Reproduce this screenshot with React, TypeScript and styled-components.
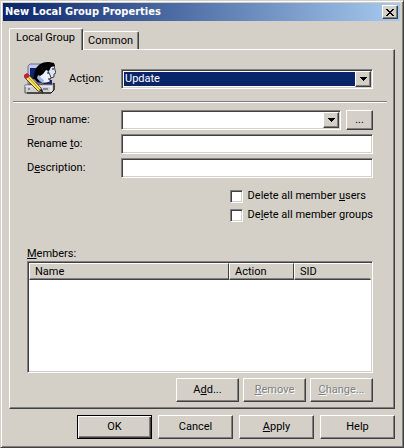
import React, { useState } from "react";
import styled, { createGlobalStyle, css } from "styled-components";

const face = "#d4d0c8";
const light = "#ffffff";
const shadow = "#808080";
const dark = "#404040";
const navy = "#0a246a";

const GlobalStyle = createGlobalStyle`
  *, *::before, *::after { box-sizing: border-box; }
  body { margin: 0; background: ${face}; }
  body, button, input, select, table {
    font-family: Roboto, Tahoma, sans-serif;
    font-size: 11px;
    line-height: 14px;
    color: #000;
  }
`;

const raised = css`
  border: 1px solid;
  border-color: ${light} ${dark} ${dark} ${light};
  box-shadow: inset -1px -1px 0 ${shadow};
`;

const sunken = css`
  border: 1px solid;
  border-color: ${shadow} ${light} ${light} ${shadow};
  box-shadow: inset 1px 1px 0 ${dark}, inset -1px -1px 0 ${face};
`;

const Dialog = styled.main`
  display: flex;
  flex-direction: column;
  min-height: 100vh;
  padding: 1px 2px 8px 1px;
  background: ${face};
  border: 1px solid;
  border-color: ${face} ${dark} ${dark} ${face};
  box-shadow: inset 1px 1px 0 ${light}, inset -1px -1px 0 ${shadow};
`;

const TitleBar = styled.header`
  display: flex;
  align-items: center;
  justify-content: space-between;
  height: 18px;
  margin: 1px 1px 0;
  padding: 0 2px;
  background: linear-gradient(to right, ${navy}, #a6caf0);
`;

const Title = styled.h1`
  margin: 0;
  font-family: "DejaVu Sans Condensed", "DejaVu Sans", Tahoma, sans-serif;
  font-size: 11px;
  line-height: 18px;
  font-weight: bold;
  color: #fff;
`;

const CloseButton = styled.button`
  ${raised}
  display: flex;
  align-items: center;
  justify-content: center;
  width: 16px;
  height: 14px;
  padding: 0;
  background: ${face};
`;

const TabList = styled.div`
  display: flex;
  align-items: flex-end;
  height: 21px;
  margin: 7px 8px 0 7px;
`;

const Tab = styled.button<{ $active: boolean }>`
  position: relative;
  z-index: ${(p) => (p.$active ? 1 : 0)};
  height: ${(p) => (p.$active ? 22 : 18)}px;
  margin-bottom: ${(p) => (p.$active ? -1 : 0)}px;
  padding: ${(p) => (p.$active ? "0 7px 4px 6px" : "0 5px 0 4px")};
  background: ${face};
  border: 1px solid;
  border-color: ${light} ${dark} transparent ${light};
  border-bottom: 0;
  border-radius: 2px 2px 0 0;
  box-shadow: inset -1px 0 0 ${shadow};
`;

const Panel = styled.section`
  ${raised}
  display: flex;
  flex-direction: column;
  flex: 1;
  margin: 0 6px 0 7px;
  padding: 12px 21px 6px 17px;
`;

const Intro = styled.div`
  display: grid;
  grid-template-columns: 42px 52px 1fr;
  align-items: center;
  height: 34px;
`;

const IntroIcon = styled.svg`
  align-self: start;
  width: 32px;
  height: 32px;
  margin-left: -3px;
`;

const Separator = styled.hr`
  width: calc(100% + 28px);
  height: 2px;
  margin: 5px -14px 0;
  border: 0;
  border-top: 1px solid ${shadow};
  border-bottom: 1px solid ${light};
`;

const Fields = styled.div`
  display: grid;
  grid-template-columns: 94px 1fr;
  align-items: center;
  row-gap: 4px;
  margin-top: 7px;
`;

const FieldLine = styled.div`
  display: flex;
  gap: 5px;
`;

const ComboFrame = styled.div`
  ${sunken}
  display: grid;
  grid-template-columns: 1fr 16px;
  flex: 1;
  height: 20px;
  padding: 1px;
  background: #fff;
`;

const ActionSelect = styled.select`
  grid-area: 1 / 1 / 2 / 3;
  appearance: none;
  min-width: 0;
  margin: 1px;
  padding: 0 0 0 1px;
  border: 0;
  border-radius: 0;
  outline: 0;
  background: ${navy};
  color: #fff;
`;

const ComboInput = styled.input`
  min-width: 0;
  padding: 0 2px;
  border: 0;
  outline: 0;
  background: #fff;
`;

const arrowBox = css`
  ${raised}
  display: flex;
  align-items: center;
  justify-content: center;
  padding: 0;
  background: ${face};
`;

const SelectArrow = styled.span`
  ${arrowBox}
  grid-area: 1 / 2 / 2 / 3;
  z-index: 1;
  pointer-events: none;
`;

const ArrowButton = styled.button`
  ${arrowBox}
`;

const TextInput = styled.input`
  ${sunken}
  width: 100%;
  height: 20px;
  padding: 0 3px;
  border-radius: 0;
  background: #fff;
  outline: 0;
`;

const Checks = styled.div`
  display: flex;
  flex-direction: column;
  align-items: flex-start;
  align-self: flex-end;
  gap: 5px;
  margin-top: 11px;
`;

const CheckLabel = styled.label`
  display: flex;
  align-items: center;
  gap: 5px;
`;

const CheckBox = styled.input`
  ${sunken}
  appearance: none;
  width: 13px;
  height: 13px;
  margin: 0;
  background: #fff;
  &:checked {
    background: #fff linear-gradient(#000, #000) center / 5px 5px no-repeat;
  }
`;

const MembersLabel = styled.h2`
  margin: 25px 0 0;
  font-size: 11px;
  line-height: 14px;
  font-weight: normal;
`;

const ListFrame = styled.div`
  ${sunken}
  flex: 1;
  min-height: 80px;
  padding: 1px;
  background: #fff;
`;

const MemberTable = styled.table`
  width: 100%;
  table-layout: fixed;
  border-collapse: separate;
  border-spacing: 0;
`;

const HeadCell = styled.th<{ $width?: number }>`
  width: ${(p) => (p.$width ? `${p.$width}px` : "auto")};
  height: 17px;
  padding: 1px 5px 0;
  background: ${face};
  border: 1px solid;
  border-color: ${light} ${(p) => (p.$width ? dark : face)} ${dark} ${light};
  box-shadow: inset 0 -1px 0 ${shadow};
  font-weight: normal;
  text-align: left;
`;

const PushButton = styled.button<{ $wide?: boolean; $default?: boolean }>`
  ${raised}
  width: ${(p) => (p.$wide ? 75 : 63)}px;
  height: 24px;
  padding: 0;
  background: ${face};
  ${(p) =>
    p.$default &&
    css`
      border-color: #000;
      box-shadow: inset 1px 1px 0 ${light}, inset -1px -1px 0 ${dark},
        inset -2px -2px 0 ${shadow};
    `}
  &:disabled {
    color: ${shadow};
    text-shadow: 1px 1px 0 ${light};
  }
`;

const BrowseButton = styled(PushButton)`
  width: 27px;
  height: 20px;
`;

const ListActions = styled.div`
  display: flex;
  justify-content: flex-end;
  gap: 4px;
  margin-top: 5px;
`;

const Footer = styled.footer`
  display: flex;
  justify-content: flex-end;
  gap: 6px;
  margin: 6px 6px 0;
`;

const Arrow = () => (
  <svg width="7" height="4" viewBox="0 0 7 4" shapeRendering="crispEdges" aria-hidden="true">
    <path d="M0 0H7V1H6V2H5V3H4V4H3V3H2V2H1V1H0Z" fill="#000" />
  </svg>
);

const Cross = () => (
  <svg width="8" height="7" viewBox="0 0 8 7" shapeRendering="crispEdges" aria-hidden="true">
    <path
      d="M0 0h2v1h1v1h2v-1h1v-1h2v1h-1v1h-1v1h-1v1h1v1h1v1h1v1h-2v-1h-1v-1h-2v1h-1v1h-2v-1h1v-1h1v-1h1v-1h-1v-1h-1v-1h-1z"
      fill="#000"
    />
  </svg>
);

const GroupIcon = () => (
  <IntroIcon viewBox="0 0 32 32" aria-hidden="true">
    <path d="M4 4L6 2H17V20L16 22H4Z" fill="#c6c9e6" stroke="#6a6e9c" />
    <path d="M6 6H15V17H6Z" fill="#12226e" />
    <path d="M5 20H28V24H5Z" fill="#6d70a8" />
    <path d="M20 18H28V22H20Z" fill="#1b2a80" />
    <path d="M1 23H27L30 21V28L27 31H1Z" fill="#d0d0d4" stroke="#55555c" />
    <path d="M1 24H27M27 24V30" fill="none" stroke="#fff" />
    <path d="M4 27H6M19 27H24" stroke="#3c3c48" />
    <path d="M30 21V28L27 31H3" fill="none" stroke="#000" />
    <path d="M14 12L17 9L22 7L25 8L26 12L28 15L26 17V20L22 21L18 21L15 18L12 16Z" fill="#eef1ff" stroke="#000" strokeWidth=".7" />
    <path d="M25 4L30 3L31 8L32 11L30 12V15L27 16L26 13L24 9Z" fill="#dbe4f8" stroke="#000" strokeWidth=".7" />
    <path d="M12 14L15 12L17 16L20 18L19 21L14 18Z" fill="#9fb2e0" />
    <path d="M9 16C11 13 10 8 13 5C16 1 20 0 25 0L30 1L31 4L27 5L25 9L22 8L19 12L16 14L14 13L13 16L17 21L13 20Z" fill="#000" />
    <path d="M23 11H25M28 7H30M24 17H26" stroke="#111" />
    <path d="M1 13L4 12L17 26L19 31L14 29L1 16Z" fill="#ffe95a" stroke="#262626" strokeWidth=".8" />
    <path d="M4 15L16 28" stroke="#bc861d" />
    <path d="M0 13L3 11L6 14L2 17L0 15Z" fill="#c02338" />
    <path d="M15 28L18 27L19 31Z" fill="#211b18" />
  </IntroIcon>
);

export default function App() {
  const [tab, setTab] = useState<"group" | "common">("group");

  return (
    <>
      <GlobalStyle />
      <Dialog>
        <TitleBar>
          <Title>New Local Group Properties</Title>
          <CloseButton type="button" aria-label="Close">
            <Cross />
          </CloseButton>
        </TitleBar>

        <TabList role="tablist">
          <Tab
            type="button"
            role="tab"
            aria-selected={tab === "group"}
            $active={tab === "group"}
            onClick={() => setTab("group")}
          >
            Local Group
          </Tab>
          <Tab
            type="button"
            role="tab"
            aria-selected={tab === "common"}
            $active={tab === "common"}
            onClick={() => setTab("common")}
          >
            Common
          </Tab>
        </TabList>

        <Panel role="tabpanel">
          {tab === "group" && (
            <>
              <Intro>
                <GroupIcon />
                <label htmlFor="action">
                  Act<u>i</u>on:
                </label>
                <ComboFrame>
                  <ActionSelect id="action" defaultValue="Update">
                    <option>Create</option>
                    <option>Replace</option>
                    <option>Update</option>
                    <option>Delete</option>
                  </ActionSelect>
                  <SelectArrow>
                    <Arrow />
                  </SelectArrow>
                </ComboFrame>
              </Intro>
              <Separator />

              <Fields>
                <label htmlFor="group-name">
                  <u>G</u>roup name:
                </label>
                <FieldLine>
                  <ComboFrame>
                    <ComboInput id="group-name" type="text" />
                    <ArrowButton type="button" aria-label="Show group names">
                      <Arrow />
                    </ArrowButton>
                  </ComboFrame>
                  <BrowseButton type="button" aria-label="Browse">
                    ...
                  </BrowseButton>
                </FieldLine>
                <label htmlFor="rename">
                  Rename <u>t</u>o:
                </label>
                <TextInput id="rename" type="text" />
                <label htmlFor="description">
                  D<u>e</u>scription:
                </label>
                <TextInput id="description" type="text" />
              </Fields>

              <Checks>
                <CheckLabel>
                  <CheckBox type="checkbox" />
                  <span>
                    Delete all member <u>u</u>sers
                  </span>
                </CheckLabel>
                <CheckLabel>
                  <CheckBox type="checkbox" />
                  <span>
                    De<u>l</u>ete all member groups
                  </span>
                </CheckLabel>
              </Checks>

              <MembersLabel id="members">
                <u>M</u>embers:
              </MembersLabel>
              <ListFrame>
                <MemberTable aria-labelledby="members">
                  <thead>
                    <tr>
                      <HeadCell $width={200}>Name</HeadCell>
                      <HeadCell $width={65}>Action</HeadCell>
                      <HeadCell>SID</HeadCell>
                    </tr>
                  </thead>
                </MemberTable>
              </ListFrame>

              <ListActions>
                <PushButton type="button">
                  A<u>d</u>d...
                </PushButton>
                <PushButton type="button" disabled>
                  <u>R</u>emove
                </PushButton>
                <PushButton type="button" disabled>
                  <u>C</u>hange...
                </PushButton>
              </ListActions>
            </>
          )}
        </Panel>

        <Footer>
          <PushButton type="button" $wide $default>
            OK
          </PushButton>
          <PushButton type="button" $wide>
            Cancel
          </PushButton>
          <PushButton type="button" $wide>
            <u>A</u>pply
          </PushButton>
          <PushButton type="button" $wide>
            Help
          </PushButton>
        </Footer>
      </Dialog>
    </>
  );
}
